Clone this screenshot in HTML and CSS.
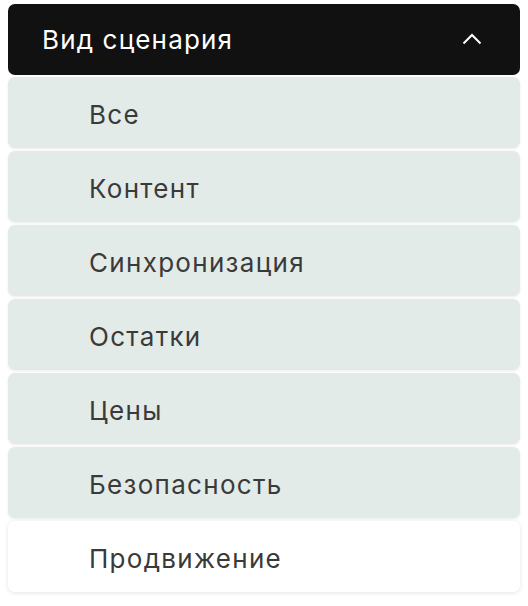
FILE: index.html
```html
<!DOCTYPE html>
<html lang="ru">
<head>
<meta charset="utf-8">
<link rel="stylesheet" href="styles.css">
</head>
<body>
<div class="dropdown">
  <div class="header">
    <span class="title">Вид сценария</span>
    <svg class="chev" width="20" height="12" viewBox="0 0 20 12"><path d="M1.5 10.5 L10 2 L18.5 10.5" fill="none" stroke="#fff" stroke-width="2"/></svg>
  </div>
  <div class="list">
    <div class="item">Все</div>
    <div class="item">Контент</div>
    <div class="item">Синхронизация</div>
    <div class="item">Остатки</div>
    <div class="item">Цены</div>
    <div class="item">Безопасность</div>
    <div class="item item-white">Продвижение</div>
  </div>
</div>
</body>
</html>
```
FILE: styles.css
```css
html, body { margin: 0; padding: 0; background: #fff; }
body { padding: 4px 8px; font-family: Inter, "Noto Sans", sans-serif; }
.dropdown { width: 512px; display: flex; flex-direction: column; gap: 2px; }
.header {
  height: 71px;
  background: #111111;
  border-radius: 7px;
  display: flex;
  align-items: center;
  justify-content: space-between;
  padding: 0 38px 0 34px;
  box-sizing: border-box;
}
.title { color: #fff; font-size: 26px; letter-spacing: 1.15px; }
.chev { display: block; margin-top: -1px; }
.list { display: flex; flex-direction: column; gap: 3px; }
.item {
  height: 71px;
  background: #e2ebe8;
  border-radius: 7px;
  display: flex;
  align-items: center;
  padding-left: 81px;
  padding-top: 3px;
  box-sizing: border-box;
  font-size: 26px;
  letter-spacing: 1.3px;
  color: #3a3a3a;
  box-shadow: 0 1px 3px rgba(0,0,0,0.08);
}
.item-white { background: #fff; box-shadow: 0 1px 5px rgba(0,0,0,0.1); }
```
